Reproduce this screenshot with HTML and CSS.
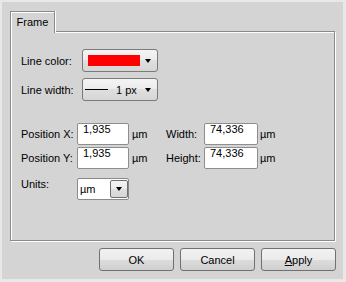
FILE: index.html
```html
<!DOCTYPE html>
<html>
<head>
<meta charset="utf-8">
<link rel="stylesheet" href="styles.css">
</head>
<body>
<div class="dialog">
  <div class="tabbar"><div class="tab">Frame</div></div>
  <div class="panel">
    <div class="row r1">
      <span class="lbl l1">Line color:</span>
      <div class="combo">
        <span class="swatch"></span>
        <span class="arrow"></span>
      </div>
    </div>
    <div class="row r2">
      <span class="lbl l1">Line width:</span>
      <div class="combo">
        <span class="line"></span>
        <span class="px">1 px</span>
        <span class="arrow"></span>
      </div>
    </div>
    <div class="row pos r3">
      <span class="lbl l2">Position X:</span>
      <span class="input w1">1,935</span>
      <span class="unit u1">µm</span>
      <span class="lbl l3">Width:</span>
      <span class="input w2">74,336</span>
      <span class="unit u2">µm</span>
    </div>
    <div class="row pos r4">
      <span class="lbl l2">Position Y:</span>
      <span class="input w1">1,935</span>
      <span class="unit u1">µm</span>
      <span class="lbl l3">Height:</span>
      <span class="input w2">74,336</span>
      <span class="unit u2">µm</span>
    </div>
    <div class="row r5">
      <span class="lbl l2 top">Units:</span>
      <div class="ucombo">
        <span class="utext">µm</span>
        <span class="ubtn"><span class="arrow"></span></span>
      </div>
    </div>
  </div>
  <div class="buttons">
    <button class="btn">OK</button>
    <button class="btn">Cancel</button>
    <button class="btn"><u>A</u>pply</button>
  </div>
</div>
</body>
</html>
```

FILE: styles.css
```css
html, body {
  margin: 0;
  padding: 0;
}
body {
  width: 346px;
  height: 282px;
  background: #e8e8e8;
  font-family: "Liberation Sans", Arial, sans-serif;
  font-size: 11px;
  color: #000;
  overflow: hidden;
}
.dialog {
  margin: 2px 0 0 2px;
  width: 341px;
  height: 277px;
  box-sizing: border-box;
  background: #d4d4d4;
  padding: 9px 0 0 8px;
}
.tabbar {
  display: flex;
  height: 22px;
  margin-bottom: -2px;
  position: relative;
  z-index: 1;
}
.tab {
  width: 45px;
  height: 22px;
  box-sizing: border-box;
  border: 1px solid #8a8a8a;
  border-bottom: none;
  background: #d4d4d4;
  box-shadow: inset 1px 1px 0 #fff, 1px 0 0 #fff;
  display: flex;
  align-items: center;
  justify-content: center;
  padding-bottom: 2px;
}
.panel {
  width: 325px;
  height: 210px;
  box-sizing: border-box;
  border: 1px solid #8a8a8a;
  box-shadow: inset 1px 1px 0 #fff, 1px 1px 0 #fff;
  padding: 17px 0 0 10px;
}
.row {
  display: flex;
  align-items: center;
  height: 23px;
}
.r2 { margin-top: 6px; }
.r3 { margin-top: 22px; height: 22px; }
.r4 { margin-top: 2px; height: 22px; }
.r5 { margin-top: 9px; height: 22px; align-items: flex-start; }
.lbl { white-space: nowrap; }
.l1 { width: 61px; }
.l2 { width: 56px; }
.l3 { width: 38px; }
.top { padding-top: 0; }
.combo {
  width: 76px;
  height: 23px;
  box-sizing: border-box;
  border: 1px solid #7a7a7a;
  border-radius: 3px;
  background: linear-gradient(#f4f4f4 0%, #ebebeb 50%, #dfdfdf 50%, #d6d6d6 100%);
  display: flex;
  align-items: center;
  padding-right: 6px;
}
.swatch {
  width: 52px;
  height: 11px;
  background: #ff0000;
  margin-left: 5px;
}
.line {
  width: 23px;
  height: 1px;
  background: #000;
  margin-left: 2px;
}
.px {
  margin-left: 8px;
}
.arrow {
  width: 0;
  height: 0;
  border-left: 3.5px solid transparent;
  border-right: 3.5px solid transparent;
  border-top: 4px solid #000;
  margin-left: auto;
}
.input {
  height: 22px;
  box-sizing: border-box;
  border: 1px solid #8e8e8e;
  border-radius: 2px;
  background: #fff;
  padding: 0 0 0 5px;
  line-height: 10px;
  display: flex;
  align-items: flex-start;
}
.w1 { width: 52px; }
.w2 { width: 54px; }
.unit { white-space: nowrap; }
.u1 { width: 34px; margin-left: 3px; }
.u2 { margin-left: 2px; }
.ucombo {
  width: 52px;
  height: 22px;
  box-sizing: border-box;
  border: 1px solid #8a8a8a;
  border-radius: 2px;
  background: #fff;
  display: flex;
  align-items: center;
  padding: 0 0 0 2px;
}
.utext { flex: 1; }
.ubtn {
  width: 18px;
  height: 18px;
  box-sizing: border-box;
  border: 1px solid #707070;
  border-radius: 2px;
  background: linear-gradient(#f4f4f4 0%, #ebebeb 50%, #dfdfdf 50%, #d6d6d6 100%);
  display: flex;
  align-items: center;
  justify-content: center;
}
.ubtn .arrow { margin-left: 0; }
.buttons {
  display: flex;
  gap: 6px;
  justify-content: flex-end;
  width: 326px;
  margin-top: 7px;
}
.btn {
  width: 75px;
  height: 23px;
  box-sizing: border-box;
  border: 1px solid #707070;
  border-radius: 3px;
  background: linear-gradient(#f2f2f2 0%, #ebebeb 50%, #dddddd 50%, #cfcfcf 100%);
  font-family: "Liberation Sans", Arial, sans-serif;
  font-size: 11px;
  color: #000;
  padding: 0;
  margin: 0;
}
```
